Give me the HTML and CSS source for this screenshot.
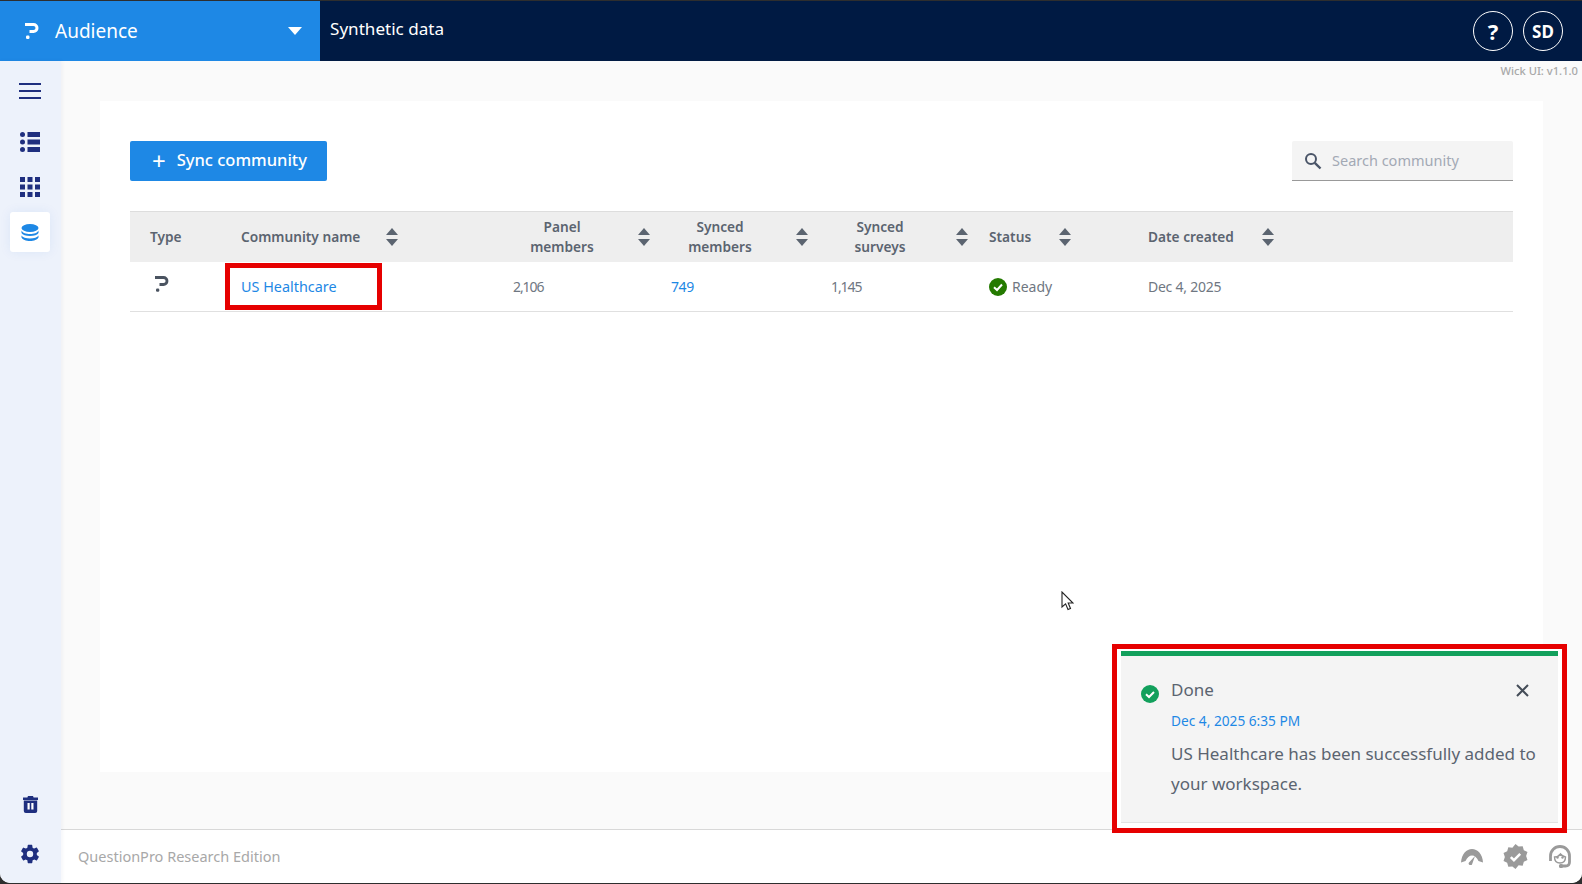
FILE: index.html
```html
<!DOCTYPE html>
<html lang="en">
<head>
<meta charset="utf-8">
<title>Synthetic data</title>
<link rel="stylesheet" href="styles.css">
</head>
<body>
<div class="app">
  <header class="topbar">
    <div class="product">
      <svg class="logo" viewBox="0 0 14 16" width="14" height="16"><path d="M0 1.500h8.500a3.500 3.500 0 0 1 0 7H4.500" fill="none" stroke="#fff" stroke-width="3"/><rect x="1" y="12.500" width="3.500" height="3.500" rx="1.200" fill="#fff"/></svg>
      <span class="product-name">Audience</span>
      <span class="caret"></span>
    </div>
    <div class="title">Synthetic data</div>
    <div class="top-actions">
      <span class="round-btn round-help">?</span>
      <span class="round-btn">SD</span>
    </div>
  </header>
  <div class="body-row">
    <nav class="sidebar">
      <div class="nav-top">
        <span class="nav-item nav-menu"><svg viewBox="0 0 22 16" width="22" height="16"><path d="M0 1h22M0 8h22M0 15h22" stroke="#1f2f7f" stroke-width="2"/></svg></span>
        <span class="nav-item"><svg viewBox="0 0 20 20" width="20" height="20" fill="#1f2f7f"><circle cx="2.500" cy="2.500" r="2.500"/><circle cx="2.500" cy="10" r="2.500"/><circle cx="2.500" cy="17.500" r="2.500"/><rect x="7.500" y="0" width="12.500" height="5"/><rect x="7.500" y="7.500" width="12.500" height="5"/><rect x="7.500" y="15" width="12.500" height="5"/></svg></span>
        <span class="nav-item"><svg viewBox="0 0 20 20" width="20" height="20" fill="#1f2f7f"><rect width="5" height="5"/><rect x="7.500" width="5" height="5"/><rect x="15" width="5" height="5"/><rect y="7.500" width="5" height="5"/><rect x="7.500" y="7.500" width="5" height="5"/><rect x="15" y="7.500" width="5" height="5"/><rect y="15" width="5" height="5"/><rect x="7.500" y="15" width="5" height="5"/><rect x="15" y="15" width="5" height="5"/></svg></span>
        <span class="nav-item nav-active"><svg viewBox="0 0 18 17" width="18" height="17" fill="#1e88e5"><ellipse cx="9" cy="4" rx="8.500" ry="4"/><path d="M.5 6.500c1 2.500 4.500 3.500 8.500 3.500s7.500-1 8.500-3.500v2.500c-1 2-4.500 3-8.500 3s-7.500-1-8.500-3z"/><path d="M.5 11.500c1 2 4.500 3 8.500 3s7.500-1 8.500-3v2c-1 2.300-4.500 3.500-8.500 3.500s-7.500-1.200-8.500-3.500z"/></svg></span>
      </div>
      <div class="nav-bottom">
        <span class="nav-item"><svg viewBox="0 0 15 17" width="15" height="17"><path d="M5 0h5l.6 1.500H15V4H0V1.500h4.400zM.8 4.500h13.400V15a2 2 0 0 1-2 2H2.800a2 2 0 0 1-2-2z" fill="#1f2f7f"/><path d="M4.500 7h2.200v6.500H4.500zM8.300 7h2.200v6.500H8.300z" fill="#fff"/></svg></span>
        <span class="nav-item"><svg viewBox="0 0 24 24" width="22" height="22"><path fill="#1f2f7f" d="M19.400 13c.04-.33.06-.66.06-1s-.02-.67-.06-1l2.100-1.650a.5.5 0 0 0 .12-.64l-2-3.460a.5.5 0 0 0-.61-.22l-2.490 1a7.300 7.300 0 0 0-1.690-.98l-.38-2.650A.49.49 0 0 0 14 2h-4a.49.49 0 0 0-.49.42l-.38 2.650c-.61.25-1.170.59-1.690.98l-2.490-1a.49.49 0 0 0-.61.22l-2 3.460a.49.49 0 0 0 .12.64L4.570 11c-.04.33-.07.67-.07 1s.03.67.07 1l-2.110 1.650a.5.5 0 0 0-.12.64l2 3.460c.12.22.39.3.61.22l2.490-1c.52.4 1.080.73 1.690.98l.38 2.650c.03.24.24.42.49.42h4c.25 0 .46-.18.49-.42l.38-2.650c.61-.25 1.170-.59 1.690-.98l2.490 1c.22.08.49 0 .61-.22l2-3.460a.5.5 0 0 0-.12-.64zM12 15.500a3.500 3.500 0 1 1 0-7 3.500 3.500 0 0 1 0 7z"/></svg></span>
      </div>
    </nav>
    <div class="content-col">
      <main class="main">
        <div class="version">Wick UI: v1.1.0</div>
        <section class="card">
          <div class="toolbar">
            <button class="primary-btn"><span class="plus">+</span><span class="btn-text">Sync community</span></button>
            <div class="search">
              <svg viewBox="0 0 18 18" width="18" height="18"><circle cx="7" cy="7" r="5" fill="none" stroke="#4a5568" stroke-width="2"/><path d="M10.800 10.800 16.500 16.500" stroke="#4a5568" stroke-width="2.400"/></svg>
              <span class="search-text">Search community</span>
            </div>
          </div>
          <div class="table">
            <div class="row head">
              <div class="cell">Type</div>
              <div class="cell"><span class="lbl w-name">Community name</span><span class="sort"></span></div>
              <div class="cell"><span class="lbl w-num">Panel members</span><span class="sort"></span></div>
              <div class="cell"><span class="lbl w-num">Synced members</span><span class="sort"></span></div>
              <div class="cell"><span class="lbl w-num">Synced surveys</span><span class="sort"></span></div>
              <div class="cell"><span class="lbl w-status">Status</span><span class="sort"></span></div>
              <div class="cell"><span class="lbl w-date">Date created</span><span class="sort"></span></div>
            </div>
            <div class="row data">
              <div class="cell"><svg class="type-logo" viewBox="0 0 14 16" width="14" height="16"><path d="M0 1.500h8.500a3.500 3.500 0 0 1 0 7H4.500" fill="none" stroke="#4a5360" stroke-width="2.800"/><rect x="1" y="12.500" width="3.300" height="3.300" rx="1.200" fill="#4a5360"/></svg></div>
              <div class="cell"><a class="link link-name">US Healthcare</a></div>
              <div class="cell num">2,106</div>
              <div class="cell"><a class="link num-soft">749</a></div>
              <div class="cell num">1,145</div>
              <div class="cell status"><svg viewBox="0 0 18 18" width="18" height="18"><circle cx="9" cy="9" r="9" fill="#247a00"/><path d="M5 9.300 8 12l5-5.500" fill="none" stroke="#fff" stroke-width="2"/></svg>Ready</div>
              <div class="cell date">Dec 4, 2025</div>
            </div>
          </div>
        </section>
      </main>
      <footer class="footer">
        <span class="edition">QuestionPro Research Edition</span>
        <div class="foot-icons">
          <svg viewBox="0 0 22 16" width="22" height="16"><path d="M0 13.500C.5 5 5.500 0 11 0s10.500 5 11 13.500l-4.500-1.500C16 8.500 13.500 6.500 11 6.500S6 8.500 4.500 12z" fill="#9a9a9a"/><path d="M14 7 8 13.500a1.800 1.800 0 0 0 3 2z" fill="#9a9a9a"/></svg>
          <svg viewBox="0 0 24 24" width="25" height="25"><path fill="#9a9a9a" d="M12 0l3 2.500 3.900-.4 1.100 3.800 3.500 1.800-1.300 3.800 1.300 3.800-3.500 1.800-1.100 3.800-3.900-.4L12 24l-3-2.500-3.900.4L4 18.100.5 16.300 1.800 12.500.5 8.700 4 6.900l1.100-3.800 3.900.4z"/><path d="M7.500 12.500l3 3 6-6" fill="none" stroke="#fff" stroke-width="2.400"/></svg>
          <svg viewBox="0 0 24 24" width="24" height="24"><path d="M2.500 16v-5a9.500 9.500 0 0 1 19 0v6c0 2.500-1.500 4-4 4h-4" fill="none" stroke="#9a9a9a" stroke-width="2.800"/><path d="M6.500 12c2.500 0 4.500-1 6-3 1 1.500 3 2.500 5 3 0 3.500-2 6-5.500 6s-5.500-2.500-5.500-6z" fill="none" stroke="#9a9a9a" stroke-width="1.400"/><circle cx="9.500" cy="12.500" r="1.200" fill="#9a9a9a"/><circle cx="14.500" cy="12.500" r="1.200" fill="#9a9a9a"/><rect x="11" y="19" width="4" height="4" rx="1.500" fill="#9a9a9a"/></svg>
        </div>
      </footer>
    </div>
  </div>

  <div class="mark mark-name"></div>
  <div class="mark mark-toast">
    <div class="toast">
      <div class="toast-bar"></div>
      <div class="toast-body">
        <svg class="toast-icon" viewBox="0 0 18 18" width="18" height="18"><circle cx="9" cy="9" r="9" fill="#12a05c"/><path d="M5 9.300 8 12l5-5" fill="none" stroke="#fff" stroke-width="2"/></svg>
        <div class="toast-text">
          <div class="toast-title">Done</div>
          <div class="toast-date">Dec 4, 2025 6:35 PM</div>
          <div class="toast-msg">US Healthcare has been successfully added to your workspace.</div>
        </div>
        <svg class="toast-close" viewBox="0 0 13 13" width="13" height="13"><path d="M1 1l11 11M12 1 1 12" stroke="#444c57" stroke-width="2"/></svg>
      </div>
    </div>
  </div>
  <svg class="cursor" viewBox="0 0 13 20" width="13" height="20"><path d="M1 1v15l3.600-3.200L7 18.500l2.500-1-2.300-5.500H12z" fill="#fff" stroke="#222" stroke-width="1.100"/></svg>
</div>
</body>
</html>
```
FILE: styles.css
```css
* { box-sizing: border-box; }
html, body { margin: 0; height: 100%; }
body {
  background: #2e2e2e;
  padding-top: 1px;
  height: 884px;
  overflow: hidden;
  font-family: "Noto Sans", "Liberation Sans", sans-serif;
  color: #5b6470;
}
.app {
  position: relative;
  width: 1582px;
  height: 882px;
  display: flex;
  flex-direction: column;
  border-radius: 0 0 10px 10px;
  overflow: hidden;
  background: #fff;
}
.topbar { display: flex; height: 60px; background: #001a43; color: #fff; flex: none; }
.product {
  width: 320px;
  background: #1e88e5;
  display: flex;
  align-items: center;
  padding: 0 18px 0 25px;
}
.logo { margin-right: 16px; flex: none; }
.product-name { font-size: 19px; flex: 1; margin-top: -1px; }
.caret { border: 7px solid transparent; border-top: 8px solid #fff; border-bottom: 0; }
.title { padding-left: 10px; font-size: 17.100px; line-height: 56px; flex: 1; }
.top-actions { display: flex; align-items: center; gap: 10px; padding-right: 19px; }
.round-btn {
  width: 40px;
  height: 40px;
  border: 1px solid #fff;
  border-radius: 50%;
  display: flex;
  align-items: center;
  justify-content: center;
  font-size: 17px;
  font-weight: 700;
}
.round-help { font-size: 22px; }
.body-row { flex: 1; display: flex; min-height: 0; }
.sidebar {
  width: 61px;
  background: #edf2fb;
  box-shadow: 1px 0 4px rgba(30, 50, 120, .06);
  display: flex;
  flex-direction: column;
  justify-content: space-between;
  padding: 10px 0 9px;
  position: relative;
  z-index: 1;
}
.nav-top { display: flex; flex-direction: column; gap: 5px; }
.nav-menu { margin-bottom: 6px; }
.nav-bottom { display: flex; flex-direction: column; gap: 10px; }
.nav-item {
  width: 40px;
  height: 40px;
  margin-left: 10px;
  display: flex;
  align-items: center;
  justify-content: center;
  border-radius: 3px;
}
.nav-active { background: #fff; box-shadow: 0 0 12px rgba(30, 90, 200, .08); }
.content-col { flex: 1; display: flex; flex-direction: column; min-width: 0; }
.main { flex: 1; background: #fafafa; padding: 0 39px 0 39px; position: relative; min-height: 0; }
.version {
  font-size: 11.200px;
  font-weight: 500;
  color: #a8a8a8;
  text-align: right;
  height: 40px;
  line-height: 20px;
  margin-right: -35px;
}
.card { background: #fff; height: 671px; padding: 40px 30px; }
.toolbar { display: flex; justify-content: space-between; height: 40px; margin-bottom: 30px; }
.primary-btn {
  width: 197px;
  height: 40px;
  background: #1e88e5;
  color: #fff;
  border: 0;
  border-radius: 2px;
  font: 500 16.500px "Noto Sans", sans-serif;
  display: flex;
  align-items: center;
  padding: 0 0 0 22px;
}
.plus { font-size: 24px; font-weight: 400; margin-right: 11px; line-height: 1; }
.btn-text { margin-top: -3px; }
.search {
  width: 221px;
  height: 40px;
  background: #f4f4f4;
  border-bottom: 1px solid #999;
  display: flex;
  align-items: center;
  padding-left: 12px;
  border-radius: 2px 2px 0 0;
}
.search-text { margin: -1px 0 0 10px; font-size: 14.500px; color: #a3a9b5; }
.table { font-size: 14px; }
.row {
  display: grid;
  grid-template-columns: 91px 272px 158px 160px 158px 159px 1fr;
  align-items: center;
}
.head {
  height: 51px;
  background: #eeeeee;
  border-top: 1px solid #ddd;
  font-weight: 600;
  font-size: 13.700px;
  color: #5b6470;
  line-height: 20px;
}
.data { height: 50px; border-bottom: 1px solid #e0e0e0; color: #6f7782; }
.cell { padding-left: 20px; display: flex; align-items: center; }
.lbl { display: block; }
.w-name { width: 127px; }
.w-num { width: 98px; margin-right: 9px; text-align: center; }
.w-status { width: 52px; }
.w-date { width: 96px; }
.sort { position: relative; width: 12px; height: 16px; margin-left: 18px; flex: none; }
.sort::before, .sort::after {
  content: "";
  position: absolute;
  left: 0;
  border: 6px solid transparent;
}
.sort::before { top: -1px; border-top: 0; border-bottom: 7px solid #5b6470; }
.sort::after { bottom: -1px; border-bottom: 0; border-top: 7px solid #5b6470; }
.link { color: #1e88e5; }
.link-name { font-size: 14.400px; }
.num { letter-spacing: -1.100px; }
.num-soft { letter-spacing: -.4px; }
.date { letter-spacing: -.25px; }
.type-logo { margin: -6px 0 0 5px; }
.status svg { margin-right: 5px; }
.footer {
  height: 54px;
  flex: none;
  background: #fff;
  border-top: 1px solid #d8d8d8;
  display: flex;
  align-items: center;
  justify-content: space-between;
  padding: 0 10px 0 17px;
}
.edition { font-size: 14.500px; color: #a8a8a8; margin-top: -2px; }
.foot-icons { display: flex; align-items: center; gap: 20px; }
.mark { position: absolute; border: 5px solid #e60000; }
.mark-name { left: 225px; top: 262px; width: 157px; height: 47px; }
.mark-toast { left: 1112px; top: 643px; width: 455px; height: 189px; padding: 2px 4px 5px; background: #fff; }
.toast { background: #f4f4f4; height: 100%; border-bottom: 1px solid #e2e2e2; }
.toast-bar { height: 5px; background: #12a05c; }
.toast-body { display: flex; align-items: flex-start; padding: 22px 0 0 20px; }
.toast-icon { margin-top: 7px; flex: none; }
.toast-text { width: 372px; margin-left: 12px; }
.toast-title { font-size: 17px; line-height: 24px; color: #5b6470; }
.toast-date { font-size: 13.700px; color: #1e88e5; line-height: 20px; margin-top: 9px; }
.toast-msg { font-size: 17px; line-height: 30px; color: #5b6470; margin-top: 8px; }
.toast-close { margin: 6px 0 0 -27px; flex: none; }
.cursor { position: absolute; left: 1061px; top: 590px; }
```
